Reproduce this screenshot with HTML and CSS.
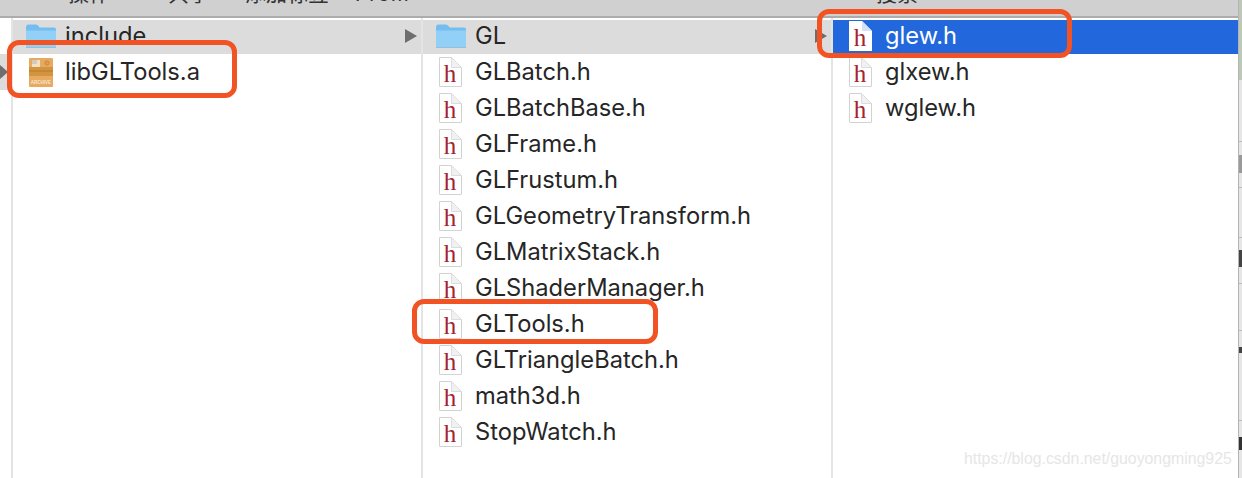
FILE: index.html
```html
<!DOCTYPE html>
<html lang="zh-CN">
  <head>
    <meta charset="UTF-8" />
    <title>Finder</title>
    <link rel="stylesheet" href="styles.css">
  </head>
  <body>
    <svg class="defs" width="0" height="0">
      <symbol id="folder" viewBox="0 0 30 24">
        <path d="M0 3q0-2.500 2-2.500h8q1.500 0 2.500 1.500l1 1.500h14.500q2 0 2 2v16.500q0 1.500-1.500 1.500h-27q-1.500 0-1.500-1.500z" fill="#74bdf0"/>
        <path d="M0 6.500h30v15.500q0 1.500-1.500 1.500h-27q-1.500 0-1.500-1.500z" fill="#92d0f8"/>
        <path d="M0 23q.3 1 1.500 1h27q1.200 0 1.500-1" fill="none" stroke="#7fa8c4" stroke-width=".7"/>
      </symbol>
      <symbol id="hfile" viewBox="0 0 23 30">
        <path d="M.5.5h12l10 10v18.500q0 .5-.5.500h-21q-.5 0-.5-.500z" fill="#fff" stroke="#d2d2d2"/>
        <path d="M12.500.5v10h10z" fill="#f1f1f1" stroke="#dcdcdc"/>
        <text x="11" y="25" class="h-letter">h</text>
      </symbol>
      <symbol id="hfile-sel" viewBox="0 0 23 30">
        <path d="M0 0h13l10 10v20h-23z" fill="#fff"/>
        <path d="M13 0v10h10z" fill="#d5e2f5"/>
        <text x="11" y="25" class="h-letter">h</text>
      </symbol>
    </svg>

    <div class="page">
      <div class="finder">
        <div class="toolbar">
          <span class="tool tool-action">操作</span>
          <span class="tool tool-share">共享</span>
          <span class="tool tool-tag">添加标签</span>
          <span class="tool tool-from">From</span>
          <span class="tool tool-search">搜索</span>
        </div>

        <div class="browser">
          <div class="gutter">
            <span class="row-stub"></span>
            <span class="row-stub stub-active"><i class="arrow arrow-dark"></i></span>
          </div>

          <div class="column col-one">
            <div class="row row-open">
              <svg class="folder-icon"><use href="#folder"/></svg>
              <span class="name">include</span>
              <i class="arrow"></i>
            </div>
            <div class="row">
              <svg class="archive-icon" viewBox="0 0 24 29">
                <rect width="24" height="29" rx="1" fill="#e8aa60"/>
                <rect y="9" width="24" height="9" fill="#d2943f"/>
                <rect y="12.500" width="24" height="1" fill="#b87a30"/>
                <rect x="3" y="2" width="8" height="7" fill="#f3dfc2"/>
                <rect x="3" y="2" width="5" height="4" fill="#d3cabb"/>
                <circle cx="18" cy="5" r="2.200" fill="#dc9c52" stroke="#b97f3a" stroke-width=".6"/>
                <text x="12" y="25.500" class="archive-label">ARCHIVE</text>
              </svg>
              <span class="name">libGLTools.a</span>
            </div>
          </div>

          <div class="column col-two">
            <div class="row row-open">
              <svg class="folder-icon"><use href="#folder"/></svg>
              <span class="name">GL</span>
              <i class="arrow"></i>
            </div>
            <div class="row"><svg class="file-icon"><use href="#hfile"/></svg><span class="name">GLBatch.h</span></div>
            <div class="row"><svg class="file-icon"><use href="#hfile"/></svg><span class="name">GLBatchBase.h</span></div>
            <div class="row"><svg class="file-icon"><use href="#hfile"/></svg><span class="name">GLFrame.h</span></div>
            <div class="row"><svg class="file-icon"><use href="#hfile"/></svg><span class="name">GLFrustum.h</span></div>
            <div class="row"><svg class="file-icon"><use href="#hfile"/></svg><span class="name">GLGeometryTransform.h</span></div>
            <div class="row"><svg class="file-icon"><use href="#hfile"/></svg><span class="name">GLMatrixStack.h</span></div>
            <div class="row"><svg class="file-icon"><use href="#hfile"/></svg><span class="name">GLShaderManager.h</span></div>
            <div class="row"><svg class="file-icon"><use href="#hfile"/></svg><span class="name">GLTools.h</span></div>
            <div class="row"><svg class="file-icon"><use href="#hfile"/></svg><span class="name">GLTriangleBatch.h</span></div>
            <div class="row"><svg class="file-icon"><use href="#hfile"/></svg><span class="name">math3d.h</span></div>
            <div class="row"><svg class="file-icon"><use href="#hfile"/></svg><span class="name">StopWatch.h</span></div>
          </div>

          <div class="column col-three">
            <div class="row row-selected"><svg class="file-icon"><use href="#hfile-sel"/></svg><span class="name">glew.h</span></div>
            <div class="row"><svg class="file-icon"><use href="#hfile"/></svg><span class="name">glxew.h</span></div>
            <div class="row"><svg class="file-icon"><use href="#hfile"/></svg><span class="name">wglew.h</span></div>
          </div>
        </div>
      </div>
      <div class="edge"></div>
    </div>

    <div class="mark mark-lib"></div>
    <div class="mark mark-tools"></div>
    <div class="mark mark-glew"></div>
    <div class="watermark">https://blog.csdn.net/guoyongming925</div>
  </body>
</html>
```

FILE: styles.css
```css
body {
  margin: 0;
  width: 1242px;
  height: 478px;
  overflow: hidden;
  position: relative;
  background-color: #fff;
  font-family: Inter, "Liberation Sans", "Noto Sans CJK SC", sans-serif;
  color: #262626;
}

.defs {
  display: block;
  height: 0;
}

.page {
  display: flex;
  height: 478px;
}

.finder {
  width: 1238px;
  flex: none;
}

.h-letter {
  font-family: "Liberation Serif", serif;
  font-size: 25px;
  fill: #a3232f;
  text-anchor: middle;
}

.archive-label {
  font-family: "Liberation Sans", sans-serif;
  font-size: 4.500px;
  font-weight: bold;
  fill: #f6e6cf;
  text-anchor: middle;
}

/* 上のツールバー */
.toolbar {
  height: 16px;
  background-color: #d0d0d0;
  border-bottom: 2px solid #acacac;
  display: flex;
  overflow: hidden;
  font-family: "Liberation Sans", "Noto Sans CJK SC", sans-serif;
  font-size: 21px;
  line-height: 1;
  color: #333;
}

.tool {
  margin-top: -17px;
  white-space: nowrap;
}

.tool-action {
  margin-left: 68px;
}

.tool-share {
  margin-left: 58px;
}

.tool-tag {
  margin-left: 35px;
}

.tool-from {
  margin-left: 26px;
  letter-spacing: 1.500px;
}

.tool-search {
  margin-left: 466px;
}

.browser {
  display: flex;
  height: 460px;
}

.gutter {
  width: 11px;
  border-right: 2px solid #e4e4e4;
  flex: none;
}

.row-stub {
  display: block;
  height: 36px;
}

.stub-active {
  background-color: #dcdcdc;
  display: flex;
  align-items: center;
}

.column {
  flex: none;
  border-right: 2px solid #e4e4e4;
  box-sizing: border-box;
}

.col-one {
  width: 410px;
}

.col-two {
  width: 410px;
}

.col-three {
  width: 405px;
  border-right: 0;
}

.row {
  height: 36px;
  display: flex;
  align-items: center;
  position: relative;
  font-size: 23.700px;
  white-space: nowrap;
}

.name {
  margin-top: -2px;
}

/* 1行目は上2pxだけ白く残る */
.row-open {
  background: linear-gradient(#fff 2px, #dcdcdc 2px);
}

.row-selected {
  background: linear-gradient(#fff 2px, #2268dc 2px);
  color: #fff;
}

.folder-icon {
  width: 30px;
  height: 24px;
  margin-left: 13px;
  margin-right: 9px;
  flex: none;
}

.archive-icon {
  width: 24px;
  height: 29px;
  margin-left: 16px;
  margin-right: 12px;
  flex: none;
}

.file-icon {
  width: 23px;
  height: 30px;
  margin-left: 16px;
  margin-right: 13px;
  flex: none;
}

.arrow {
  display: block;
  width: 0;
  height: 0;
  border-left: 12px solid #6e6e6e;
  border-top: 7px solid transparent;
  border-bottom: 7px solid transparent;
  position: absolute;
  right: 4px;
  top: 11px;
}

.arrow-dark {
  position: static;
  border-left-width: 8px;
}

/* 右端に見えている後ろのウィンドウ */
.edge {
  flex: 1;
  background:
    linear-gradient(to right, #b4b4b4 1px, transparent 1px),
    linear-gradient(#bcc8b8 80px, #e6e6e6 80px, #e6e6e6 141px, #bbb 141px, #bbb 142px, #e6e6e6 142px,
      #e6e6e6 155px, #999 155px, #999 173px, #e6e6e6 173px, #e6e6e6 187px, #bbb 187px, #bbb 188px,
      #e6e6e6 188px, #e6e6e6 237px, #bbb 237px, #bbb 238px, #e6e6e6 238px, #e6e6e6 250px, #444 250px,
      #444 267px, #e6e6e6 267px, #e6e6e6 283px, #bbb 283px, #bbb 284px, #e6e6e6 284px, #e6e6e6 330px,
      #bbb 330px, #bbb 331px, #e6e6e6 331px, #e6e6e6 347px, #444 347px, #444 353px, #e6e6e6 353px,
      #e6e6e6 420px, #bbb 420px, #bbb 421px, #e6e6e6 421px, #e6e6e6 437px, #333 437px, #333 450px,
      #e6e6e6 450px);
}

/* 赤い囲み */
.mark {
  position: absolute;
  border: 5px solid #f25325;
  border-radius: 12px;
  box-sizing: border-box;
}

.mark-lib {
  left: 7px;
  top: 40px;
  width: 230px;
  height: 58px;
}

.mark-tools {
  left: 412px;
  top: 299px;
  width: 246px;
  height: 45px;
}

.mark-glew {
  left: 817px;
  top: 9px;
  width: 255px;
  height: 49px;
}

.watermark {
  position: absolute;
  left: 964px;
  top: 450px;
  font-family: "Liberation Sans", sans-serif;
  font-size: 15.850px;
  color: #e6e6e6;
}
```
